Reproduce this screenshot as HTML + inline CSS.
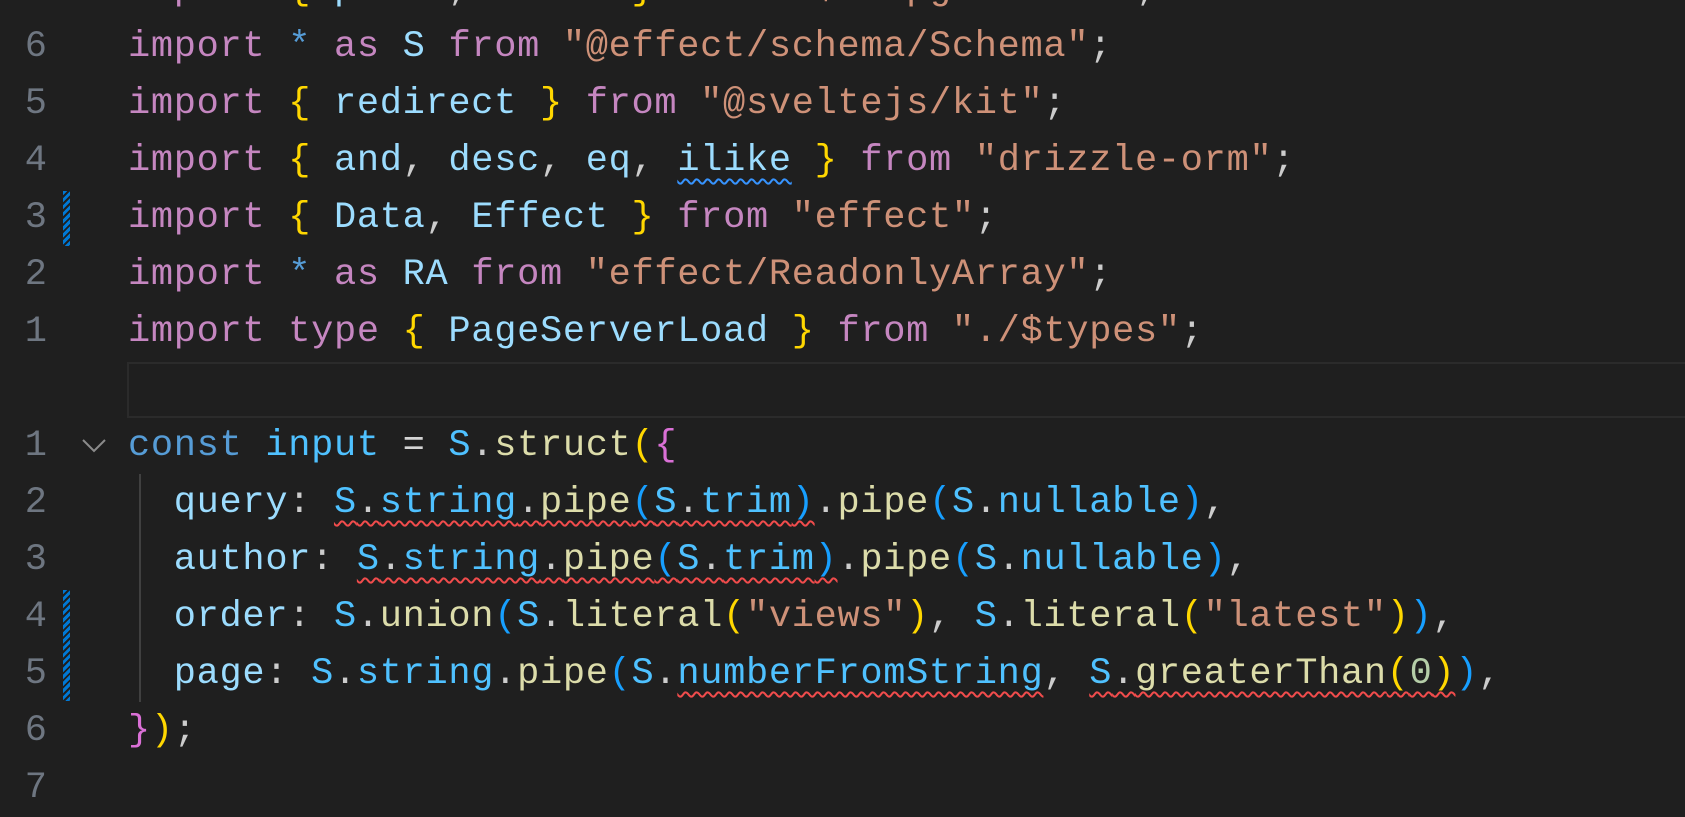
<!DOCTYPE html>
<html><head><meta charset="utf-8"><style>
html,body{margin:0;padding:0;width:1685px;height:785px;overflow:hidden;background:#1f1f1f}
.l{position:absolute;left:0;height:57px;line-height:57px;width:1685px;white-space:pre;font-family:"Liberation Mono",monospace;font-size:37px;letter-spacing:0.68px}
.n{position:absolute;left:0;width:47px;text-align:right;color:#6e7681;letter-spacing:0}
.c{position:absolute;left:128px}
.k{color:#c586c0}.b{color:#ffd700}.v{color:#9cdcfe}.s{color:#ce9178}.p{color:#cccccc}
.o{color:#4fc1ff}.f{color:#dcdcaa}.q{color:#569cd6}.b2{color:#da70d6}.b3{color:#179fff}.op{color:#d4d4d4}.num{color:#b5cea8}
.r{text-decoration:underline wavy #f14c4c;text-decoration-thickness:2px;text-underline-offset:8px}
.bl{text-decoration:underline wavy #3794ff;text-decoration-thickness:2px;text-underline-offset:8px}
.m{position:absolute;left:63px;width:7px;background:repeating-linear-gradient(135deg,#0078d4 0 3px,#1f1f1f 3px 5px)}
</style></head><body>
<div style="position:absolute;left:127px;top:362px;width:1560px;height:52px;border:2px solid #2b2b2b;border-right:none"></div>
<div style="position:absolute;left:139px;top:474px;width:2px;height:228px;background:#404040"></div>
<div class="m" style="top:191px;height:55px"></div>
<div class="m" style="top:590px;height:111px"></div>
<svg style="position:absolute;left:80px;top:435px" width="30" height="22"><path d="M3 5 L14 16 L25 5" stroke="#8b8b8b" stroke-width="2" fill="none"/></svg>

<div class="l" style="top:-38px"><span class="n">7</span><span class="c"><span class="k">import</span> <span class="b">{</span> <span class="v">posts</span><span class="p">,</span> <span class="v">users</span> <span class="b">}</span> <span class="k">from</span> <span class="s">"$db/pg.schema"</span><span class="p">;</span></span></div>
<div class="l" style="top:19px"><span class="n">6</span><span class="c"><span class="k">import</span> <span class="q">*</span> <span class="k">as</span> <span class="v">S</span> <span class="k">from</span> <span class="s">"@effect/schema/Schema"</span><span class="p">;</span></span></div>
<div class="l" style="top:76px"><span class="n">5</span><span class="c"><span class="k">import</span> <span class="b">{</span> <span class="v">redirect</span> <span class="b">}</span> <span class="k">from</span> <span class="s">"@sveltejs/kit"</span><span class="p">;</span></span></div>
<div class="l" style="top:133px"><span class="n">4</span><span class="c"><span class="k">import</span> <span class="b">{</span> <span class="v">and</span><span class="p">,</span> <span class="v">desc</span><span class="p">,</span> <span class="v">eq</span><span class="p">,</span> <span class="v bl">ilike</span> <span class="b">}</span> <span class="k">from</span> <span class="s">"drizzle-orm"</span><span class="p">;</span></span></div>
<div class="l" style="top:190px"><span class="n">3</span><span class="c"><span class="k">import</span> <span class="b">{</span> <span class="v">Data</span><span class="p">,</span> <span class="v">Effect</span> <span class="b">}</span> <span class="k">from</span> <span class="s">"effect"</span><span class="p">;</span></span></div>
<div class="l" style="top:247px"><span class="n">2</span><span class="c"><span class="k">import</span> <span class="q">*</span> <span class="k">as</span> <span class="v">RA</span> <span class="k">from</span> <span class="s">"effect/ReadonlyArray"</span><span class="p">;</span></span></div>
<div class="l" style="top:304px"><span class="n">1</span><span class="c"><span class="k">import</span> <span class="k">type</span> <span class="b">{</span> <span class="v">PageServerLoad</span> <span class="b">}</span> <span class="k">from</span> <span class="s">"./$types"</span><span class="p">;</span></span></div>
<div class="l" style="top:418px"><span class="n">1</span><span class="c"><span class="q">const</span> <span class="o">input</span> <span class="op">=</span> <span class="o">S</span><span class="p">.</span><span class="f">struct</span><span class="b">(</span><span class="b2">{</span></span></div>
<div class="l" style="top:475px"><span class="n">2</span><span class="c">  <span class="v">query</span><span class="p">:</span> <span class="r"><span class="o">S</span><span class="p">.</span><span class="o">string</span><span class="p">.</span><span class="f">pipe</span><span class="b3">(</span><span class="o">S</span><span class="p">.</span><span class="o">trim</span><span class="b3">)</span></span><span class="p">.</span><span class="f">pipe</span><span class="b3">(</span><span class="o">S</span><span class="p">.</span><span class="o">nullable</span><span class="b3">)</span><span class="p">,</span></span></div>
<div class="l" style="top:532px"><span class="n">3</span><span class="c">  <span class="v">author</span><span class="p">:</span> <span class="r"><span class="o">S</span><span class="p">.</span><span class="o">string</span><span class="p">.</span><span class="f">pipe</span><span class="b3">(</span><span class="o">S</span><span class="p">.</span><span class="o">trim</span><span class="b3">)</span></span><span class="p">.</span><span class="f">pipe</span><span class="b3">(</span><span class="o">S</span><span class="p">.</span><span class="o">nullable</span><span class="b3">)</span><span class="p">,</span></span></div>
<div class="l" style="top:589px"><span class="n">4</span><span class="c">  <span class="v">order</span><span class="p">:</span> <span class="o">S</span><span class="p">.</span><span class="f">union</span><span class="b3">(</span><span class="o">S</span><span class="p">.</span><span class="f">literal</span><span class="b">(</span><span class="s">"views"</span><span class="b">)</span><span class="p">,</span> <span class="o">S</span><span class="p">.</span><span class="f">literal</span><span class="b">(</span><span class="s">"latest"</span><span class="b">)</span><span class="b3">)</span><span class="p">,</span></span></div>
<div class="l" style="top:646px"><span class="n">5</span><span class="c">  <span class="v">page</span><span class="p">:</span> <span class="o">S</span><span class="p">.</span><span class="o">string</span><span class="p">.</span><span class="f">pipe</span><span class="b3">(</span><span class="o">S</span><span class="p">.</span><span class="o r">numberFromString</span><span class="p">,</span> <span class="r"><span class="o">S</span><span class="p">.</span><span class="f">greaterThan</span><span class="b">(</span><span class="num">0</span><span class="b">)</span></span><span class="b3">)</span><span class="p">,</span></span></div>
<div class="l" style="top:703px"><span class="n">6</span><span class="c"><span class="b2">}</span><span class="b">)</span><span class="p">;</span></span></div>
<div class="l" style="top:760px"><span class="n">7</span><span class="c"></span></div>
</body></html>
